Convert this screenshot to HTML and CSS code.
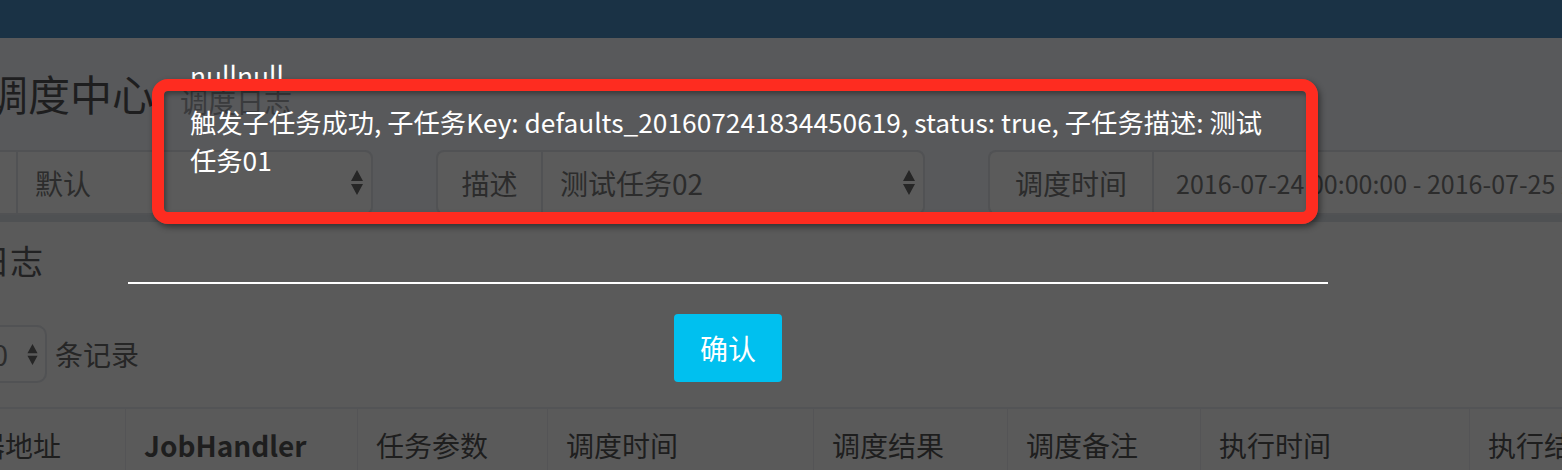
FILE: index.html
```html
<!DOCTYPE html>
<html lang="zh-CN">
<head>
<meta charset="utf-8">
<title>调度日志</title>
<link rel="stylesheet" href="styles.css">
</head>
<body>
<div class="page">
  <header class="navbar"></header>
  <section class="content-header">
    <h1 class="title">调度中心</h1>
    <small class="subtitle">调度日志</small>
  </section>
  <div class="filters">
    <div class="group">
      <span class="addon addon-cut">执行器</span>
      <div class="select select-1"><span>默认</span>
        <svg class="caret" width="12" height="25" viewBox="0 0 12 25"><path d="M0 11 L6 0 L12 11 Z M0 14 L12 14 L6 25 Z"/></svg>
      </div>
    </div>
    <div class="group">
      <span class="addon addon-desc">描述</span>
      <div class="select select-2"><span>测试任务02</span>
        <svg class="caret" width="12" height="25" viewBox="0 0 12 25"><path d="M0 11 L6 0 L12 11 Z M0 14 L12 14 L6 25 Z"/></svg>
      </div>
    </div>
    <div class="group">
      <span class="addon addon-time">调度时间</span>
      <div class="input-date">2016-07-24 00:00:00 - 2016-07-25 23:59:59</div>
    </div>
  </div>
  <div class="band"></div>
  <div class="box">
    <h3 class="box-title">调度日志</h3>
    <div class="length">
      <div class="select select-len"><span>10</span>
        <svg class="caret" width="11" height="21" viewBox="0 0 12 25"><path d="M0 11 L6 0 L12 11 Z M0 14 L12 14 L6 25 Z"/></svg>
      </div>
      <span class="length-label">条记录</span>
    </div>
    <table class="grid">
      <colgroup>
        <col class="c0"><col class="c1"><col class="c2"><col class="c3"><col class="c4"><col class="c5"><col class="c6"><col class="c7">
      </colgroup>
      <thead>
        <tr>
          <th>机器地址</th>
          <th><b>JobHandler</b></th>
          <th>任务参数</th>
          <th>调度时间</th>
          <th>调度结果</th>
          <th>调度备注</th>
          <th>执行时间</th>
          <th>执行结果</th>
        </tr>
      </thead>
    </table>
  </div>
</div>

<div class="modal">
  <div class="modal-title">nullnull</div>
  <div class="modal-body">触发子任务成功, 子任务Key: defaults_201607241834450619, status: true, 子任务描述: 测试任务01</div>
  <div class="modal-footer"><button class="btn" type="button">确认</button></div>
</div>

<div class="annotation"></div>
</body>
</html>
```

FILE: styles.css
```css
* { box-sizing: border-box; }
html, body { margin: 0; padding: 0; }
body {
  width: 1562px;
  height: 470px;
  overflow: hidden;
  position: relative;
  background: #58595b;
  font-family: "Noto Sans CJK SC", "Noto Sans", sans-serif;
}
.page { width: 1562px; overflow: hidden; }
.navbar { height: 38px; background: #1a3245; }

.content-header { height: 112px; display: flex; align-items: flex-start; }
.title {
  margin: 34px 0 0 -14px;
  font-size: 42px;
  line-height: 42px;
  font-weight: normal;
  color: #1e1e1f;
  white-space: nowrap;
}
.subtitle {
  margin: 49px 0 0 26px;
  font-size: 28px;
  line-height: 28px;
  color: #3a3b3d;
  white-space: nowrap;
}

.filters { display: flex; gap: 63px; height: 65px; margin-left: -144px; }
.group { display: flex; height: 65px; flex: none; }
.addon {
  display: flex;
  align-items: center;
  justify-content: center;
  font-size: 28px;
  color: #2c2c2c;
  background: #5b5b5b;
  border: 2px solid #515254;
  border-right: 0;
  border-radius: 8px 0 0 8px;
  white-space: nowrap;
}
.addon-cut { width: 160px; }
.addon-desc { width: 105px; }
.addon-time { width: 164px; }
.select {
  display: flex;
  align-items: center;
  justify-content: space-between;
  background: #5b5b5b;
  border: 2px solid #515254;
  border-radius: 0 8px 8px 0;
  font-size: 28px;
  color: #2c2c2c;
  white-space: nowrap;
  padding: 0 8px 0 17px;
}
.select-1 { width: 357px; }
.select-2 { width: 384px; }
.caret { fill: #262626; flex: none; }
.input-date {
  width: 520px;
  display: flex;
  align-items: center;
  padding-left: 22px;
  background: #5b5b5b;
  border: 2px solid #515254;
  font-size: 25px;
  color: #2c2c2c;
  white-space: nowrap;
}

.band { height: 7px; background: #4f5153; }
.box { background: #5a5a5a; padding-top: 22px; height: 248px; }
.box-title {
  margin: 0 0 0 -89px;
  font-size: 33px;
  line-height: 33px;
  font-weight: normal;
  color: #222223;
  white-space: nowrap;
}
.length { display: flex; align-items: center; margin: 48px 0 0 -53px; height: 58px; }
.select-len {
  width: 100px;
  height: 58px;
  border-radius: 10px;
  padding: 0 7px 0 28px;
}
.length-label { margin-left: 8px; font-size: 28px; color: #262626; white-space: nowrap; }

.grid {
  margin: 24px 0 0 -70px;
  border-collapse: collapse;
  table-layout: fixed;
  width: 1839px;
}
.c0 { width: 195px; }
.c1 { width: 232px; }
.c2 { width: 190px; }
.c3 { width: 266px; }
.c4 { width: 194px; }
.c5 { width: 193px; }
.c6 { width: 269px; }
.c7 { width: 300px; }
.grid th {
  border-top: 2px solid #535456;
  border-left: 1px solid #545456;
  padding: 22px 18px 20px;
  text-align: left;
  font-size: 28px;
  line-height: 28px;
  font-weight: normal;
  color: #1e1e1e;
  white-space: nowrap;
  overflow: hidden;
}
.grid th b { font-weight: bold; }

.modal {
  position: absolute;
  left: 128px;
  top: 56px;
  width: 1200px;
  color: #fff;
}
.modal-title { padding: 0 62px; font-size: 26.3px; line-height: 38px; }
.modal-body { padding: 9px 62px 103px; font-size: 26.3px; line-height: 38px; }
.modal-footer {
  border-top: 2px solid #fff;
  padding-top: 30px;
  display: flex;
  justify-content: center;
}
.btn {
  width: 108px;
  height: 68px;
  background: #00c0ef;
  border: 0;
  border-radius: 4px;
  color: #fff;
  font-family: inherit;
  font-size: 28px;
  padding: 0;
}

.annotation {
  position: absolute;
  left: 152px;
  top: 79px;
  width: 1166px;
  height: 145px;
  border: 12px solid #fe2c20;
  border-radius: 16px;
  box-shadow: 2px 3px 6px rgba(0, 0, 0, 0.45), inset 2px 3px 5px rgba(0, 0, 0, 0.35);
}
```
